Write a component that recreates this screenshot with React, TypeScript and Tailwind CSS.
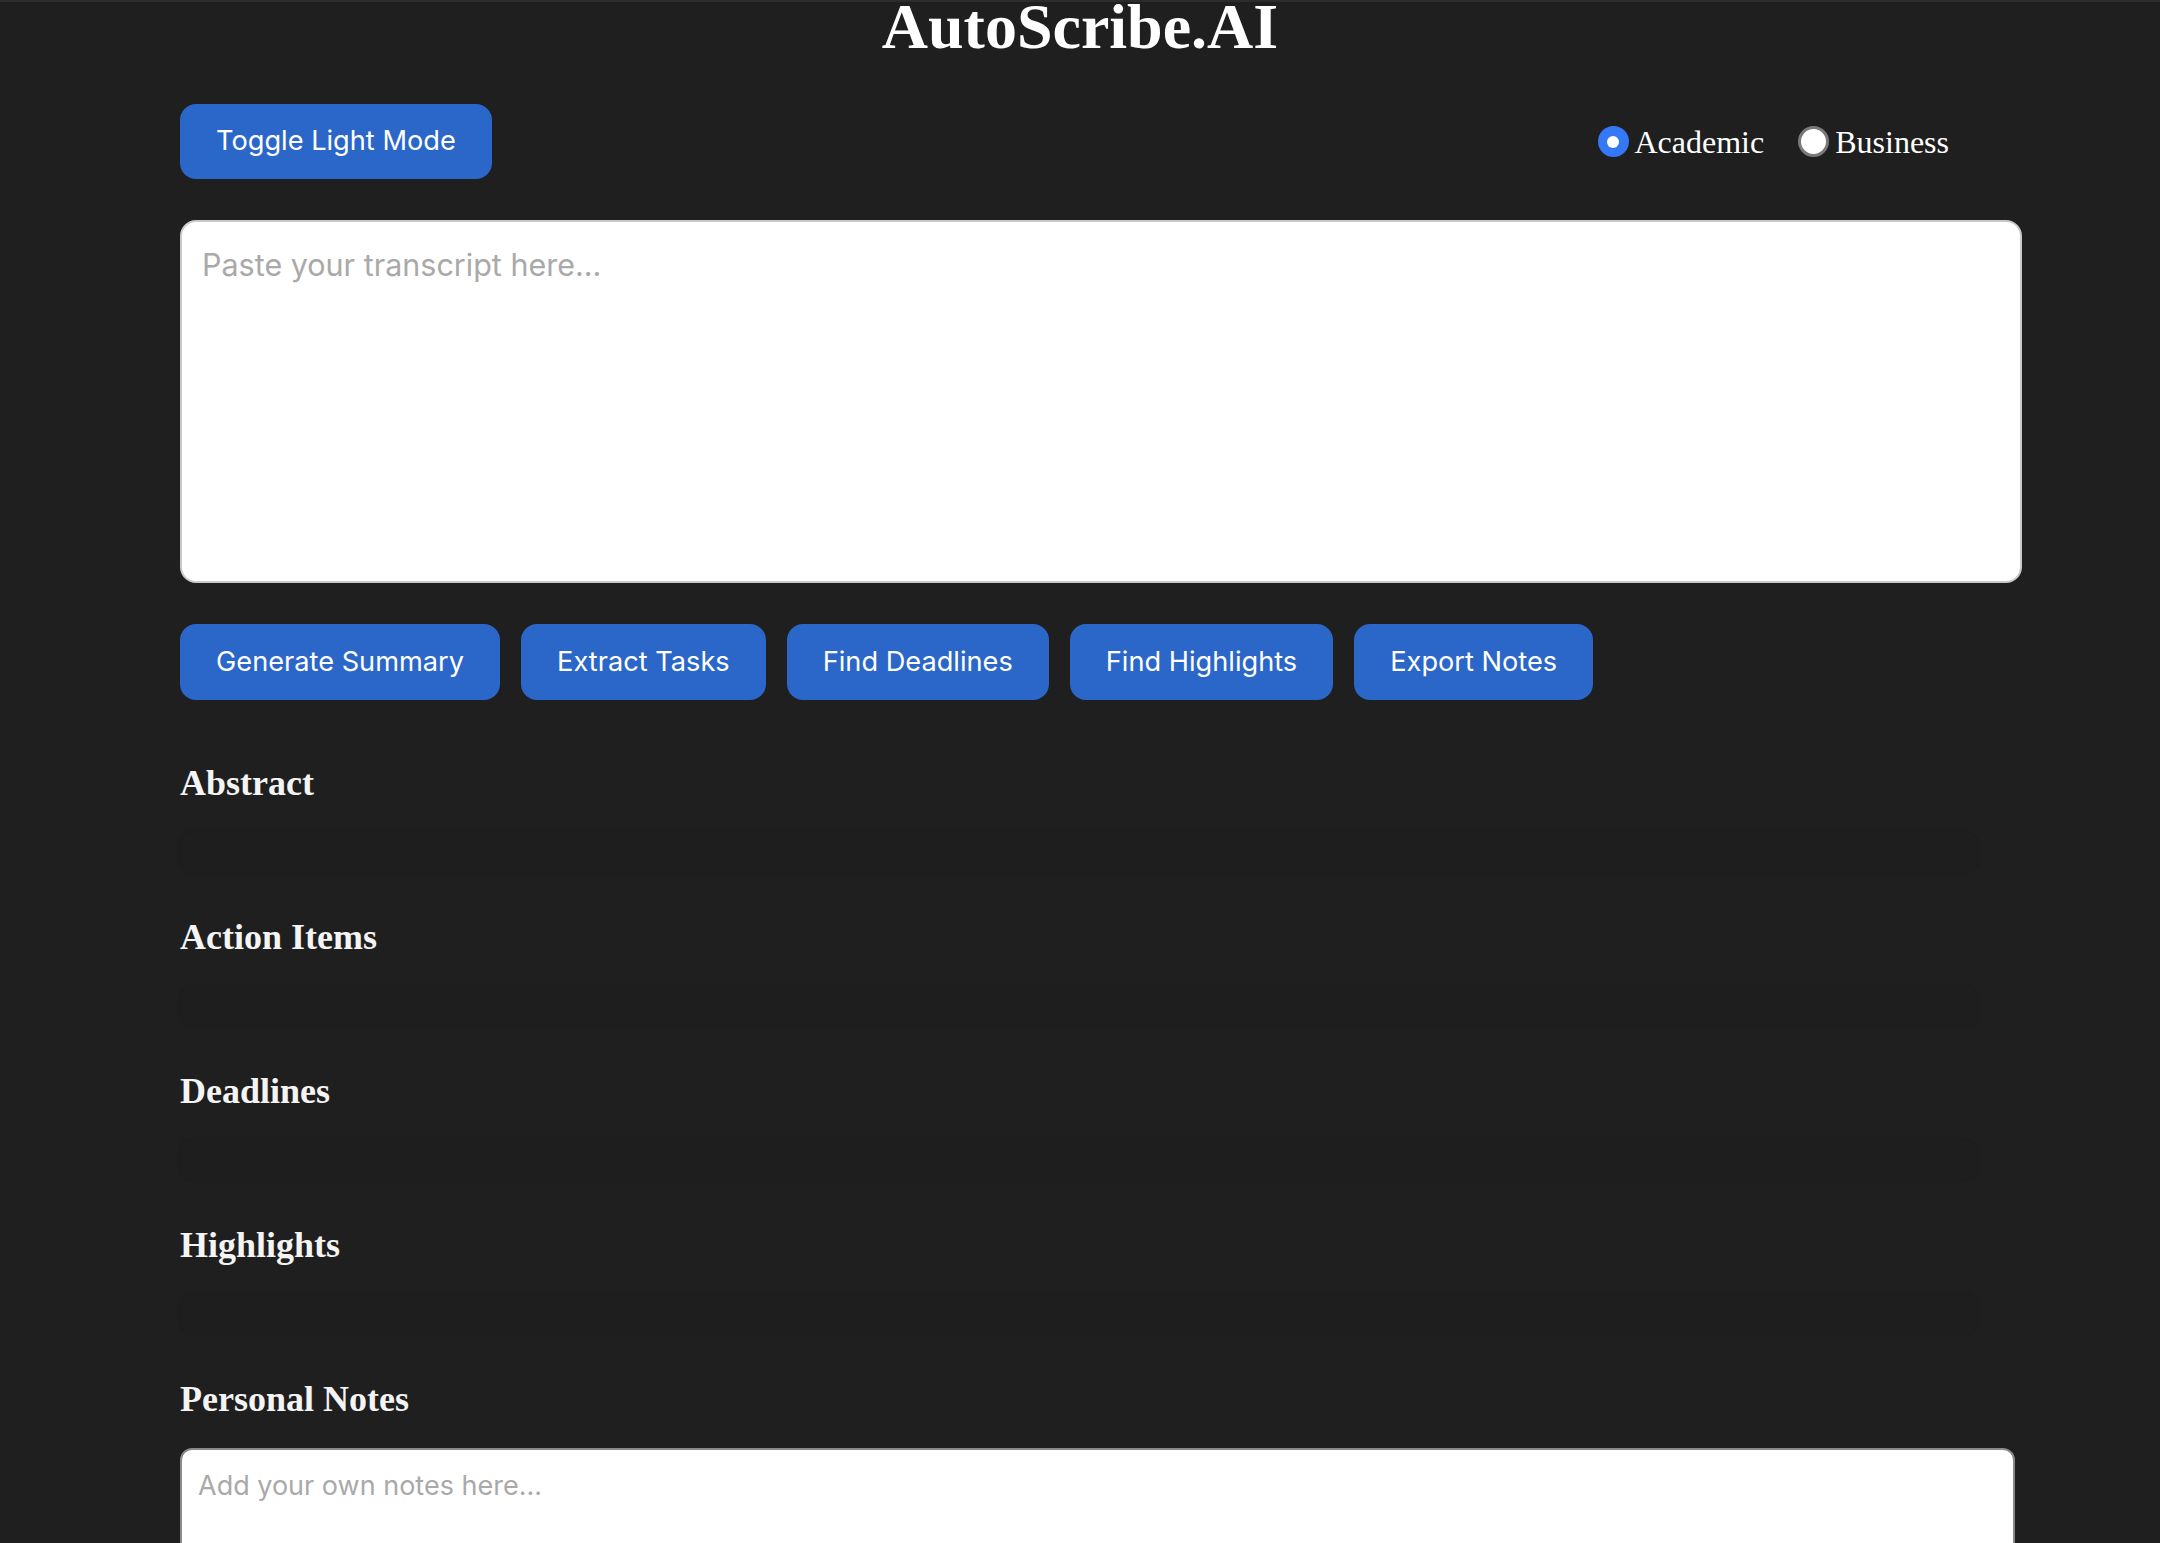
import React, { useState } from "react";

const sections = ["Abstract", "Action Items", "Deadlines", "Highlights"];
const actions = [
  "Generate Summary",
  "Extract Tasks",
  "Find Deadlines",
  "Find Highlights",
  "Export Notes",
];

const Radio = ({ checked, label, onClick }: { checked: boolean; label: string; onClick: () => void }) => (
  <label className="flex items-center cursor-pointer" onClick={onClick}>
    {checked ? (
      <span className="w-[31px] h-[31px] rounded-full bg-[#3478f6] flex items-center justify-center">
        <span className="w-[12px] h-[12px] rounded-full bg-white" />
      </span>
    ) : (
      <span className="w-[31px] h-[31px] rounded-full bg-white border-[3px] border-[#7a7a7a] box-border" />
    )}
    <span className="ml-[6px] text-[32px] text-white font-['Liberation_Serif',serif]">{label}</span>
  </label>
);

const App: React.FC = () => {
  const [mode, setMode] = useState("academic");

  return (
    <div className="w-[2160px] h-[1543px] overflow-hidden bg-[#1f1f1f] border-t-2 border-[#2c2c2c] font-['Inter',sans-serif]">
      <h1 className="-mt-[7px] text-center text-[64px] leading-none font-bold text-white font-['Liberation_Serif',serif]">
        AutoScribe.AI
      </h1>

      <div className="pl-[180px]">
        {/* Top controls */}
        <div className="w-[1842px] mt-[45px] flex items-center justify-between">
          <button className="h-[75px] px-[36px] rounded-[16px] bg-[#2b66c9] text-white text-[27.2px]">
            Toggle Light Mode
          </button>
          <div className="flex items-center gap-[34px] mr-[73px]">
            <Radio checked={mode === "academic"} label="Academic" onClick={() => setMode("academic")} />
            <Radio checked={mode === "business"} label="Business" onClick={() => setMode("business")} />
          </div>
        </div>

        <textarea
          className="block mt-[41px] w-[1842px] h-[363px] p-[20px] rounded-[16px] border-2 border-[#c9c9c9] bg-white text-[30.5px] text-black placeholder:text-[#a9a9a9] resize-none outline-none"
          placeholder="Paste your transcript here..."
        />

        {/* Action buttons */}
        <div className="mt-[41px] flex gap-[21px]">
          {actions.map((a) => (
            <button
              key={a}
              className="h-[76px] px-[36px] rounded-[16px] bg-[#2b66c9] text-white text-[27.2px]"
            >
              {a}
            </button>
          ))}
        </div>

        {/* Output sections */}
        <div className="mt-[65px]">
          {sections.map((s) => (
            <div key={s} className="mb-[47px]">
              <h3 className="text-[36px] leading-[37px] font-bold text-[#f4f4f4] font-['Liberation_Serif',serif]">
                {s}
              </h3>
              <div className="mt-[30px] w-[1798px] h-[40px] rounded-[12px] bg-[#1e1e1e] shadow-[0_0_3px_rgba(0,0,0,0.15)]" />
            </div>
          ))}
          <h3 className="text-[36px] leading-[37px] font-bold text-[#f4f4f4] font-['Liberation_Serif',serif]">
            Personal Notes
          </h3>
          <textarea
            className="block mt-[30px] w-[1835px] h-[240px] p-[16px] rounded-[12px] border-2 border-[#8a8a8a] bg-white text-[27px] text-black placeholder:text-[#a9a9a9] resize-none outline-none"
            placeholder="Add your own notes here..."
          />
        </div>
      </div>
    </div>
  );
};

export default App;
